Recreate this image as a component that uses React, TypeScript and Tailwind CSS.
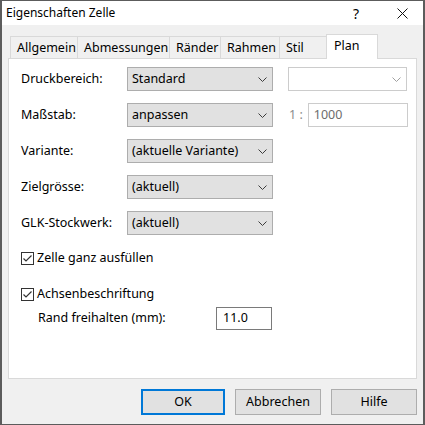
import React from 'react'

const font = { fontFamily: '"Noto Sans", "Open Sans", sans-serif' }

function Chevron({ color = '#3c3c3c' }: { color?: string }) {
  return (
    <svg width="9" height="5" viewBox="0 0 9 5" className="shrink-0">
      <polyline points="0.5,0.5 4.5,4.5 8.5,0.5" fill="none" stroke={color} strokeWidth="1" />
    </svg>
  )
}

function Combo({ value }: { value: string }) {
  return (
    <div className="flex h-[24px] w-[146px] items-center justify-between border border-[#adadad] bg-[#e1e1e1] pl-[4px] pr-[5px] text-[12.5px] text-black">
      <span>{value}</span>
      <Chevron />
    </div>
  )
}

function CheckBox({ label }: { label: string }) {
  return (
    <div className="flex items-center gap-[3px] text-[12.5px] text-black">
      <div className="flex h-[13px] w-[13px] items-center justify-center border border-[#333333] bg-white">
        <svg width="11" height="11" viewBox="0 0 11 11">
          <polyline points="1.5,5.5 4,8 9.5,2.5" fill="none" stroke="#333" strokeWidth="1.2" />
        </svg>
      </div>
      <span>{label}</span>
    </div>
  )
}

const tabs = [
  { label: 'Allgemein', w: 68 },
  { label: 'Abmessungen', w: 93 },
  { label: 'Ränder', w: 52 },
  { label: 'Rahmen', w: 60 },
  { label: 'Stil', w: 48 },
]

const rows = [
  { label: 'Druckbereich:', value: 'Standard' },
  { label: 'Maßstab:', value: 'anpassen' },
  { label: 'Variante:', value: '(aktuelle Variante)' },
  { label: 'Zielgrösse:', value: '(aktuell)' },
  { label: 'GLK-Stockwerk:', value: '(aktuell)' },
]

export default function App() {
  return (
    <div style={font} className="flex h-[425px] w-[425px] flex-col border-x-2 border-y border-[#5c5c5c] bg-[#f0f0f0]">
      {/* title bar */}
      <div className="flex h-[24px] shrink-0 items-center bg-white pl-[4px] pr-[15px] text-[12px] text-black">
        <span className="flex-1">Eigenschaften Zelle</span>
        <span className="mr-[38px] text-[14px]">?</span>
        <svg width="11" height="11" viewBox="0 0 11 11">
          <path d="M0.5 0.5 L10.5 10.5 M10.5 0.5 L0.5 10.5" stroke="#111" strokeWidth="1" />
        </svg>
      </div>

      <div className="flex flex-1 flex-col pl-[6px] pr-[6px] pt-[9px]">
        {/* tabs */}
        <div className="relative z-10 flex h-[24px] items-end pl-[2px]">
          {tabs.map((t) => (
            <div
              key={t.label}
              style={{ width: t.w }}
              className="-mr-px flex h-[22px] items-center overflow-hidden whitespace-nowrap border border-b-0 border-[#d9d9d9] bg-[#f0f0f0] pl-[6px] pt-[1px] text-[12.5px] text-black"
            >
              {t.label}
            </div>
          ))}
          <div className="-mb-px flex h-[25px] w-[52px] items-start border border-b-0 border-[#d9d9d9] bg-white pl-[7px] pt-[2px] text-[12.5px] text-black">
            Plan
          </div>
        </div>

        {/* panel */}
        <div className="flex h-[321px] flex-col border border-[#d9d9d9] bg-white pl-[12px] pt-[8px]">
          <div className="flex flex-col gap-[12px]">
            {rows.map((r, i) => (
              <div key={r.label} className="flex items-center">
                <span className="w-[106px] text-[12.5px] text-black">{r.label}</span>
                <Combo value={r.value} />
                {i === 0 && (
                  <div className="ml-[15px] flex h-[24px] w-[119px] items-center justify-end border border-[#cccccc] bg-white pr-[5px]">
                    <Chevron color="#a0a0a0" />
                  </div>
                )}
                {i === 1 && (
                  <div className="ml-[16px] flex items-center">
                    <span className="text-[12.5px] text-[#8c8c8c]">1 :</span>
                    <div className="ml-[5px] flex h-[24px] w-[100px] items-center border border-[#cccccc] bg-white pl-[5px] text-[12.5px] text-[#6d6d6d]">
                      1000
                    </div>
                  </div>
                )}
              </div>
            ))}
          </div>

          <div className="mt-[14px]">
            <CheckBox label="Zelle ganz ausfüllen" />
          </div>
          <div className="mt-[17px]">
            <CheckBox label="Achsenbeschriftung" />
          </div>
          <div className="mt-[3px] flex items-center pl-[17px]">
            <span className="w-[178px] text-[12.5px] text-black">Rand freihalten (mm):</span>
            <div className="flex h-[23px] w-[56px] items-center border border-[#7a7a7a] bg-white pl-[6px] text-[12.5px] text-black">
              11.0
            </div>
          </div>
        </div>

        {/* buttons */}
        <div className="mt-[10px] flex justify-end gap-[10px]">
          <button className="h-[26px] w-[84px] border-2 border-[#0078d7] bg-[#e1e1e1] text-[12.5px] text-black">OK</button>
          <button className="h-[26px] w-[86px] border border-[#adadad] bg-[#e1e1e1] text-[12.5px] text-black">Abbrechen</button>
          <button className="h-[26px] w-[86px] border border-[#adadad] bg-[#e1e1e1] text-[12.5px] text-black">Hilfe</button>
        </div>
      </div>
    </div>
  )
}
